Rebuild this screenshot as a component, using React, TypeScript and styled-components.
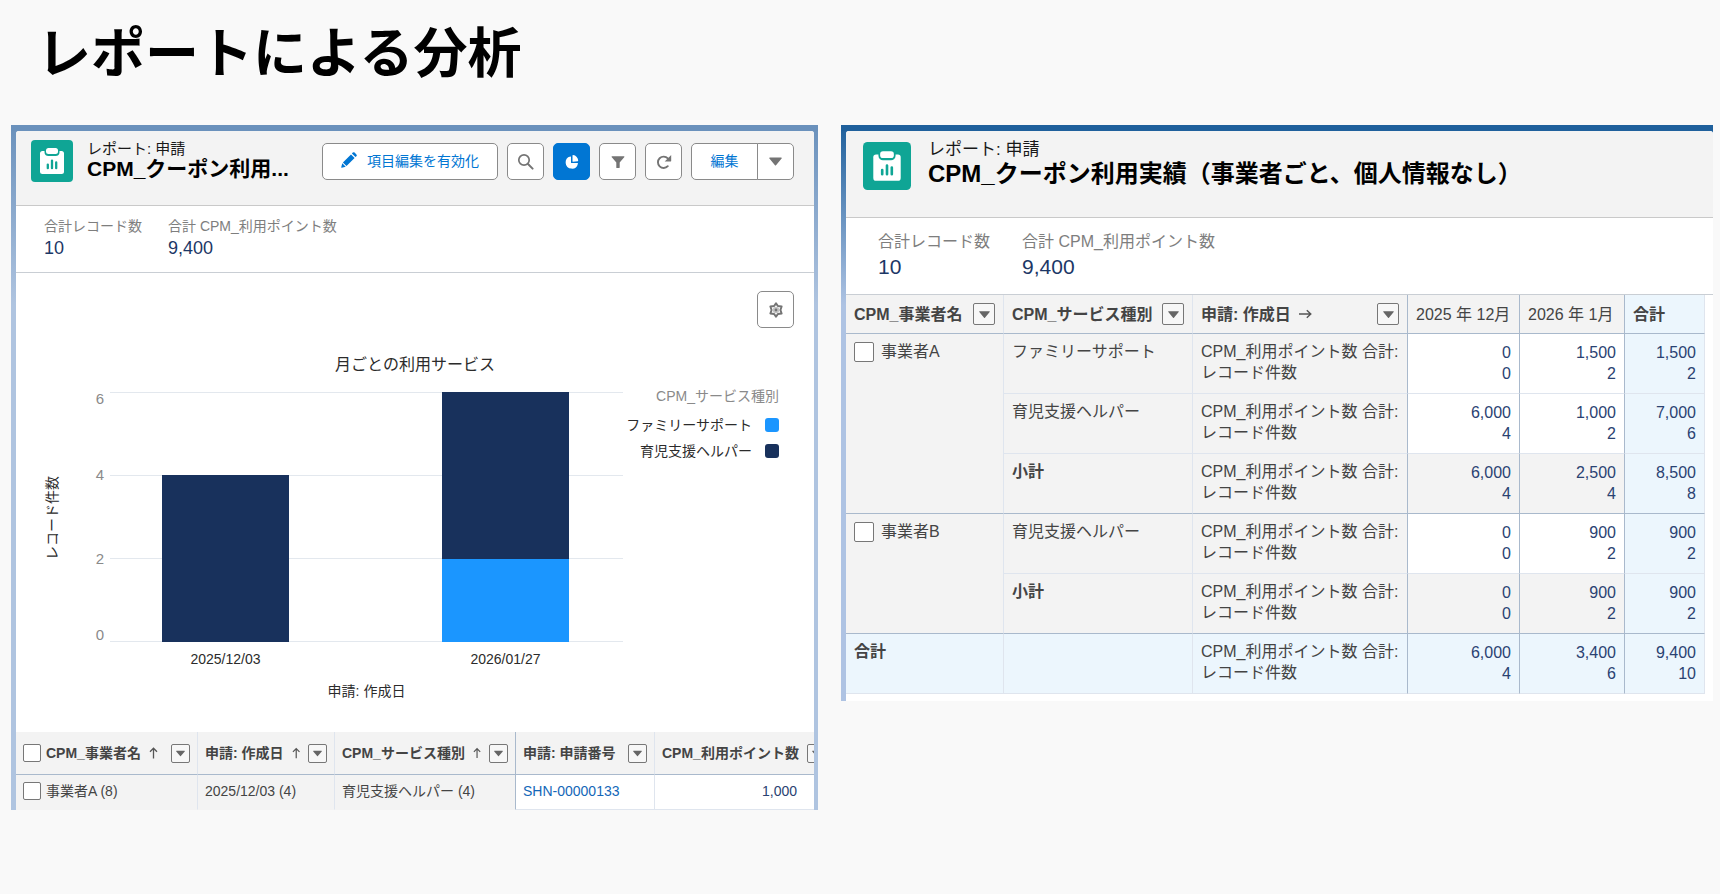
import React from "react";
import styled, { createGlobalStyle, css } from "styled-components";

const GlobalStyle = createGlobalStyle`
  *, *::before, *::after { box-sizing: border-box; }
  body {
    margin: 0;
    background: #f9f9f9;
    color: #444;
    font-family: "Liberation Sans", "Noto Sans CJK JP", sans-serif;
    font-size: 14px;
  }
  button { font: inherit; }
`;

const navy = "#18315c";
const sky = "#1b96ff";
const gray = "#f3f3f3";

const SlideTitle = styled.h1`
  margin: 0;
  padding: 10px 37px 35px;
  color: #000;
  font-family: "Noto Sans CJK JP", sans-serif;
  font-size: 54px;
  line-height: 80px;
  font-weight: 700;
`;

const Reports = styled.main`
  display: grid;
  grid-template-columns: minmax(0, 807fr) minmax(0, 872fr);
  gap: 23px;
  align-items: start;
  padding: 0 7px 40px 11px;
`;

const Frame = styled.section<{ $top: string; $side: string; $right?: boolean }>`
  padding: 6px ${(p) => (p.$right ? 4 : 0)}px 0 5px;
  background: linear-gradient(${(p) => p.$top}, ${(p) => p.$top}) top / 100% 6px no-repeat,
    linear-gradient(${(p) => p.$top}, ${(p) => p.$side} 180px);
`;

const FrameBody = styled.div`
  overflow: hidden;
  background: #fff;
  border-radius: 3px 3px 0 0;
`;

const Header = styled.header<{ $large?: boolean }>`
  display: flex;
  align-items: flex-start;
  gap: ${(p) => (p.$large ? 17 : 14)}px;
  min-height: ${(p) => (p.$large ? 87 : 75)}px;
  padding: 9px 20px 0 ${(p) => (p.$large ? 17 : 15)}px;
  background: ${gray};
  border-bottom: 1px solid #c9c9c9;
`;

const HeaderIcon = styled.svg<{ $large?: boolean }>`
  flex: none;
  width: ${(p) => (p.$large ? 48 : 42)}px;
  height: ${(p) => (p.$large ? 48 : 42)}px;
  margin-top: ${(p) => (p.$large ? 2 : 0)}px;
`;

const Heading = styled.div`
  flex: 1;
  min-width: 0;
  color: #000;
  white-space: nowrap;
`;

const Kind = styled.p<{ $large?: boolean }>`
  margin: 0;
  color: #181818;
  font-size: ${(p) => (p.$large ? 17 : 15)}px;
  line-height: ${(p) => (p.$large ? 20 : 17)}px;
`;

const ReportName = styled.h2<{ $large?: boolean }>`
  margin: 0;
  font-size: ${(p) => (p.$large ? 24 : 21)}px;
  line-height: ${(p) => (p.$large ? 28 : 24)}px;
  font-weight: 700;
`;

const Toolbar = styled.div`
  display: flex;
  gap: 9px;
  padding-top: 3px;
`;

const Button = styled.button<{ $brand?: boolean }>`
  display: flex;
  align-items: center;
  justify-content: center;
  gap: 10px;
  height: 37px;
  min-width: 37px;
  padding: 0;
  border: 1px solid ${(p) => (p.$brand ? "#0176d3" : "#8a8a8a")};
  border-radius: 5px;
  background: ${(p) => (p.$brand ? "#0176d3" : "#fff")};
  color: ${(p) => (p.$brand ? "#fff" : "#747474")};
`;

const TextButton = styled(Button)`
  padding: 0 18px 3px;
  color: #0176d3;
`;

const ButtonGroup = styled.div`
  display: flex;
  & > button:first-child { width: 67px; border-radius: 5px 0 0 5px; }
  & > button:last-child { margin-left: -1px; border-radius: 0 5px 5px 0; }
`;

const Metrics = styled.dl<{ $large?: boolean }>`
  display: flex;
  gap: ${(p) => (p.$large ? 32 : 26)}px;
  margin: 0;
  height: ${(p) => (p.$large ? 77 : 67)}px;
  padding: ${(p) => (p.$large ? "12px 32px 0" : "10px 28px 0")};
  border-bottom: 1px solid #c9ced4;
  font-size: ${(p) => (p.$large ? 16 : 14)}px;

  dt { color: #7e7e7e; line-height: ${(p) => (p.$large ? 24 : 20)}px; }
  dd {
    margin: 0;
    color: #1c3766;
    font-size: ${(p) => (p.$large ? 21 : 18)}px;
    line-height: 25px;
  }
`;

const ChartArea = styled.figure`
  margin: 0;
  padding: 18px 20px 32px;
  color: #2b2b2b;
`;

const ChartTools = styled.div`
  display: flex;
  justify-content: flex-end;
`;

const ChartTitle = styled.figcaption`
  margin: 25px 0 10px;
  text-align: center;
  font-size: 16px;
  line-height: 24px;
`;

const Chart = styled.div`
  display: grid;
  grid-template-columns: 18px 43px minmax(0, 1fr) 156px;
  padding: 0 15px 0 7px;
`;

const YTitle = styled.div`
  align-self: center;
  height: 84px;
  margin-top: 7px;
  writing-mode: vertical-rl;
  text-orientation: sideways;
  transform: rotate(180deg);
  line-height: 18px;
`;

const YTicks = styled.div`
  display: grid;
  grid-template-rows: 1fr 2fr 2fr 1fr;
  align-items: center;
  height: 250px;
  margin-top: 5px;
  color: #8a8a8a;
  font-size: 15px;
  line-height: 14px;
  text-align: right;
  & > :first-child { align-self: start; }
  & > :last-child { align-self: end; }
`;

const Plot = styled.div`
  display: grid;
  height: 250px;
  margin: 5px 0 0 6px;
  & > * { grid-area: 1 / 1; }
`;

const GridLines = styled.div`
  display: flex;
  flex-direction: column;
  justify-content: space-between;
  & > i { height: 1px; background: #e3e8ee; }
`;

const columns = css`
  display: grid;
  grid-template-columns: 1fr 1fr;
  column-gap: 153px;
  padding: 0 54px 0 52px;
`;

const Bars = styled.div`
  ${columns}
  align-items: end;
  z-index: 1;
`;

const Bar = styled.div`
  display: flex;
  flex-direction: column;
  justify-content: flex-end;
  height: 100%;
`;

const Segment = styled.div<{ $color: string; $count: number }>`
  height: ${(p) => (p.$count / 6) * 100}%;
  background: ${(p) => p.$color};
`;

const XTicks = styled.div`
  ${columns}
  grid-column: 3;
  margin: 8px 0 0 6px;
  line-height: 18px;
  text-align: center;
  white-space: nowrap;
`;

const XTitle = styled.div`
  grid-column: 3;
  margin: 14px 0 0 6px;
  line-height: 18px;
  text-align: center;
`;

const Legend = styled.div`
  text-align: right;
  white-space: nowrap;
  p { margin: 0; color: #8a8a8a; line-height: 18px; }
  ul { margin: 7px 0 0; padding: 0; list-style: none; }
  li { display: flex; justify-content: flex-end; align-items: center; gap: 13px; line-height: 26px; }
`;

const Swatch = styled.span<{ $color: string }>`
  width: 14px;
  height: 14px;
  border-radius: 3px;
  background: ${(p) => p.$color};
`;

const Table = styled.table<{ $large?: boolean }>`
  width: 100%;
  min-width: ${(p) => (p.$large ? 0 : 817)}px;
  table-layout: fixed;
  border-collapse: separate;
  border-spacing: 0;
  font-size: ${(p) => (p.$large ? 16 : 14)}px;
  line-height: ${(p) => (p.$large ? 21 : 18)}px;
  white-space: nowrap;
`;

type Edge = "light" | "strong";
const edgeColor = { light: "#dfe5ee", strong: "#a9b9cc" };

const HeadCell = styled.th<{ $edge?: Edge; $large?: boolean; $total?: boolean; $plain?: boolean }>`
  height: ${(p) => (p.$large ? 39 : 43)}px;
  padding: 0 ${(p) => (p.$large ? 8 : 7)}px;
  background: ${(p) => (p.$total ? "#ecf6fd" : gray)};
  border-right: 1px solid ${(p) => edgeColor[p.$edge ?? "light"]};
  border-bottom: 1px solid #a9b9cc;
  font-weight: ${(p) => (p.$plain ? 400 : 700)};
  text-align: left;
`;

const HeadContent = styled.div`
  display: flex;
  align-items: center;
  gap: 8px;
  & > button { margin-left: auto; }
`;

const MenuButton = styled.button<{ $large?: boolean }>`
  display: flex;
  flex: none;
  align-items: center;
  justify-content: center;
  width: ${(p) => (p.$large ? 22 : 19)}px;
  height: ${(p) => (p.$large ? 22 : 19)}px;
  padding: 0;
  border: 1px solid #777;
  border-radius: 2px;
  background: #f7f7f7;
  color: #666;
`;

const CheckLabel = styled.label<{ $large?: boolean }>`
  display: flex;
  align-items: center;
  gap: ${(p) => (p.$large ? 7 : 5)}px;
`;

const Checkbox = styled.input.attrs({ type: "checkbox" })<{ $large?: boolean }>`
  appearance: none;
  flex: none;
  width: ${(p) => (p.$large ? 20 : 18)}px;
  height: ${(p) => (p.$large ? 20 : 18)}px;
  margin: 0;
  border: 1px solid #777;
  border-radius: 2px;
  background: #fff;
  &:checked { background: #0176d3; }
`;

const DetailCell = styled.td<{ $edge?: Edge; $grouped?: boolean }>`
  height: 35px;
  padding: 0 7px 3px;
  background: ${(p) => (p.$grouped ? gray : "#fff")};
  border-right: 1px solid ${(p) => edgeColor[p.$edge ?? "light"]};
  border-bottom: 1px solid ${(p) => (p.$grouped ? gray : "#dfe5ee")};
  a { color: #1467b8; text-decoration: none; }
`;

const AmountCell = styled(DetailCell)`
  padding-right: 35px;
  color: #2a4272;
  text-align: right;
`;

const MatrixCell = styled.td<{ $edge?: Edge; $last?: boolean; $tone: "gray" | "white" | "blue"; $strong?: boolean; $num?: boolean }>`
  height: 60px;
  padding: ${(p) => (p.$num ? "8px 8px 0" : "7px 8px 0")};
  vertical-align: top;
  background: ${(p) => ({ gray, white: "#fff", blue: "#ecf6fd" })[p.$tone]};
  border-right: 1px solid ${(p) => edgeColor[p.$edge ?? "light"]};
  border-bottom: 1px solid ${(p) => edgeColor[p.$last ? "strong" : "light"]};
  color: ${(p) => (p.$num ? "#2a4272" : "#444")};
  font-weight: ${(p) => (p.$strong ? 700 : 400)};
  text-align: ${(p) => (p.$num ? "right" : "left")};
`;

const TableWrap = styled.div`
  padding: 0 8px 7px 0;
`;

function ReportIcon({ large }: { large?: boolean }) {
  return (
    <HeaderIcon $large={large} viewBox="0 0 42 42" aria-hidden="true">
      <rect width="42" height="42" rx="4" fill="#0fa595" />
      <rect x="9" y="11" width="24" height="23" rx="2.5" fill="#fff" />
      <rect x="13.5" y="6.5" width="15" height="9.5" rx="4" fill="#0fa595" />
      <rect x="15" y="8" width="12" height="6" rx="2.5" fill="#fff" />
      <path d="M16.8 24.6v3.6M21 20.6v7.6M25.2 22.4v5.8" stroke="#0fa595" strokeWidth="2.3" strokeLinecap="round" />
    </HeaderIcon>
  );
}

const Triangle = ({ size = 9 }: { size?: number }) => (
  <svg width={size} height={size} viewBox="0 0 10 10" aria-hidden="true">
    <path d="M.6 2h8.8a.4.4 0 0 1 .3.7L5.4 7.9a.5.5 0 0 1-.8 0L.3 2.7A.4.4 0 0 1 .6 2z" fill="currentColor" />
  </svg>
);

const SortArrow = ({ right }: { right?: boolean }) =>
  right ? (
    <svg width="13" height="12" viewBox="0 0 13 12" fill="none" stroke="#555" strokeWidth="1.4" aria-hidden="true">
      <path d="M0 6h11.5M7.8 2.2 11.8 6l-4 3.8" />
    </svg>
  ) : (
    <svg width="9" height="12" viewBox="0 0 9 12" fill="none" stroke="#555" strokeWidth="1.3" aria-hidden="true">
      <path d="M4.5 11.5V1.5M1 4.8l3.5-3.6L8 4.8" />
    </svg>
  );

const PencilIcon = () => (
  <svg width="16" height="16" viewBox="0 0 16 16" fill="currentColor" aria-hidden="true">
    <path d="M1.9 10.5 10 2.4l3.6 3.6-8.1 8.1zM10.9 1.5l.9-.9a1.3 1.3 0 0 1 1.8 0l1.8 1.8a1.3 1.3 0 0 1 0 1.8l-.9.9zM1.3 11.3l3.4 3.4-3.9 1.1c-.4.1-.7-.2-.6-.6z" />
  </svg>
);

const SearchIcon = () => (
  <svg width="17" height="17" viewBox="0 0 17 17" fill="none" stroke="currentColor" aria-hidden="true">
    <circle cx="7" cy="7" r="5.2" strokeWidth="1.7" />
    <path d="m11 11 4.6 4.6" strokeWidth="2" strokeLinecap="round" />
  </svg>
);

const PieIcon = () => (
  <svg width="14" height="14" viewBox="0 0 14 14" fill="currentColor" aria-hidden="true">
    <path d="M6 1.9a.5.5 0 0 0-.6-.5A6.2 6.2 0 1 0 12.9 8.7a.5.5 0 0 0-.5-.7H6.5a.5.5 0 0 1-.5-.5z" />
    <path d="M7.5.6c0-.3.2-.5.5-.5a5.6 5.6 0 0 1 5.200 5.6c0 .3-.2.5-.5.5L8 6.7a.5.5 0 0 1-.5-.5z" />
  </svg>
);

const FunnelIcon = () => (
  <svg width="14" height="14" viewBox="0 0 14 14" fill="currentColor" aria-hidden="true">
    <path d="M1.2 1.2h11.6c.5 0 .8.6.4 1L8.700 7.5v5c0 .3-.2.5-.5.5H5.8a.5.5 0 0 1-.5-.5v-5L.8 2.2c-.4-.4-.1-1 .4-1z" />
  </svg>
);

const RefreshIcon = () => (
  <svg width="16" height="16" viewBox="0 0 16 16" aria-hidden="true">
    <path d="M11.8 12.2A5.7 5.7 0 1 1 11.800 4.400" fill="none" stroke="currentColor" strokeWidth="1.9" strokeLinecap="round" />
    <path d="M15.200.9v6c0 .3-.2.5-.5.5H8.700z" fill="currentColor" />
  </svg>
);

const GearIcon = () => (
  <svg width="16" height="16" viewBox="0 0 16 16" fill="none" stroke="currentColor" aria-hidden="true">
    <path d="M8 1.4 9.900 4 13.600 4.500 12.400 8 13.600 11.500 9.900 12 8 14.600 6.100 12 2.400 11.500 3.600 8 2.400 4.500 6.100 4z" strokeWidth="2" strokeLinejoin="round" />
    <circle cx="8" cy="8" r="3.200" fill="#c4c4c4" stroke="none" />
    <circle cx="8" cy="8" r="1.400" fill="currentColor" stroke="none" />
  </svg>
);

function ColumnHead({ text, arrow, large }: { text: React.ReactNode; arrow?: "up" | "right"; large?: boolean }) {
  return (
    <HeadContent>
      {text}
      {arrow && <SortArrow right={arrow === "right"} />}
      <MenuButton $large={large} type="button" aria-label="列のアクション">
        <Triangle size={large ? 11 : 9} />
      </MenuButton>
    </HeadContent>
  );
}

type Pair = [string, string];
interface MatrixRow {
  group?: string;
  span?: number;
  service: string;
  subtotal?: boolean;
  last?: boolean;
  values: [Pair, Pair, Pair];
}

const matrix: MatrixRow[] = [
  { group: "事業者A", span: 3, service: "ファミリーサポート", values: [["0", "0"], ["1,500", "2"], ["1,500", "2"]] },
  { service: "育児支援ヘルパー", values: [["6,000", "4"], ["1,000", "2"], ["7,000", "6"]] },
  { service: "小計", subtotal: true, last: true, values: [["6,000", "4"], ["2,500", "4"], ["8,500", "8"]] },
  { group: "事業者B", span: 2, service: "育児支援ヘルパー", values: [["0", "0"], ["900", "2"], ["900", "2"]] },
  { service: "小計", subtotal: true, last: true, values: [["0", "0"], ["900", "2"], ["900", "2"]] },
];

const totals: Pair[] = [["6,000", "4"], ["3,400", "6"], ["9,400", "10"]];

const Measures = () => (
  <>
    CPM_利用ポイント数 合計:
    <br />
    レコード件数
  </>
);

function Summary({ large }: { large?: boolean }) {
  return (
    <Metrics $large={large}>
      <div>
        <dt>合計レコード数</dt>
        <dd>10</dd>
      </div>
      <div>
        <dt>合計 CPM_利用ポイント数</dt>
        <dd>9,400</dd>
      </div>
    </Metrics>
  );
}

function UsageReport() {
  return (
    <Frame $top="#6a91bc" $side="#afc4e0" $right>
      <FrameBody>
        <Header>
          <ReportIcon />
          <Heading>
            <Kind>レポート: 申請</Kind>
            <ReportName>CPM_クーポン利用...</ReportName>
          </Heading>
          <Toolbar>
            <TextButton type="button">
              <PencilIcon />
              項目編集を有効化
            </TextButton>
            <Button type="button" aria-label="検索"><SearchIcon /></Button>
            <Button type="button" $brand aria-label="グラフ"><PieIcon /></Button>
            <Button type="button" aria-label="検索条件"><FunnelIcon /></Button>
            <Button type="button" aria-label="更新"><RefreshIcon /></Button>
            <ButtonGroup>
              <TextButton type="button">編集</TextButton>
              <Button type="button" aria-label="その他のアクション"><Triangle size={13} /></Button>
            </ButtonGroup>
          </Toolbar>
        </Header>
        <Summary />
        <ChartArea>
          <ChartTools>
            <Button type="button" aria-label="グラフのプロパティ"><GearIcon /></Button>
          </ChartTools>
          <ChartTitle>月ごとの利用サービス</ChartTitle>
          <Chart>
            <YTitle>レコード件数</YTitle>
            <YTicks>
              <span>6</span>
              <span>4</span>
              <span>2</span>
              <span>0</span>
            </YTicks>
            <Plot>
              <GridLines><i /><i /><i /><i /></GridLines>
              <Bars>
                <Bar><Segment $color={navy} $count={4} /></Bar>
                <Bar>
                  <Segment $color={navy} $count={4} />
                  <Segment $color={sky} $count={2} />
                </Bar>
              </Bars>
            </Plot>
            <Legend>
              <p>CPM_サービス種別</p>
              <ul>
                <li>ファミリーサポート<Swatch $color={sky} /></li>
                <li>育児支援ヘルパー<Swatch $color={navy} /></li>
              </ul>
            </Legend>
            <XTicks>
              <span>2025/12/03</span>
              <span>2026/01/27</span>
            </XTicks>
            <XTitle>申請: 作成日</XTitle>
          </Chart>
        </ChartArea>
        <Table>
          <colgroup>
            <col width="182" />
            <col width="137" />
            <col width="181" />
            <col width="139" />
            <col width="178" />
          </colgroup>
          <thead>
            <tr>
              <HeadCell><ColumnHead arrow="up" text={<CheckLabel><Checkbox />CPM_事業者名</CheckLabel>} /></HeadCell>
              <HeadCell><ColumnHead arrow="up" text="申請: 作成日" /></HeadCell>
              <HeadCell $edge="strong"><ColumnHead arrow="up" text="CPM_サービス種別" /></HeadCell>
              <HeadCell><ColumnHead text="申請: 申請番号" /></HeadCell>
              <HeadCell><ColumnHead text="CPM_利用ポイント数" /></HeadCell>
            </tr>
          </thead>
          <tbody>
            <tr>
              <DetailCell $grouped><CheckLabel><Checkbox />事業者A (8)</CheckLabel></DetailCell>
              <DetailCell $grouped>2025/12/03 (4)</DetailCell>
              <DetailCell $grouped $edge="strong">育児支援ヘルパー (4)</DetailCell>
              <DetailCell><a href="#SHN-00000133">SHN-00000133</a></DetailCell>
              <AmountCell>1,000</AmountCell>
            </tr>
          </tbody>
        </Table>
      </FrameBody>
    </Frame>
  );
}

function ProviderReport() {
  return (
    <Frame $top="#1f609c" $side="#aec3e3">
      <FrameBody>
        <Header $large>
          <ReportIcon large />
          <Heading>
            <Kind $large>レポート: 申請</Kind>
            <ReportName $large>CPM_クーポン利用実績（事業者ごと、個人情報なし）</ReportName>
          </Heading>
        </Header>
        <Summary large />
        <TableWrap>
          <Table $large>
            <colgroup>
              <col width="158" />
              <col width="189" />
              <col width="215" />
              <col width="112" />
              <col width="105" />
              <col width="80" />
            </colgroup>
            <thead>
              <tr>
                <HeadCell $large><ColumnHead large text="CPM_事業者名" /></HeadCell>
                <HeadCell $large><ColumnHead large text="CPM_サービス種別" /></HeadCell>
                <HeadCell $large $edge="strong"><ColumnHead large arrow="right" text="申請: 作成日" /></HeadCell>
                <HeadCell $large $plain $edge="strong">2025 年 12月</HeadCell>
                <HeadCell $large $plain $edge="strong">2026 年 1月</HeadCell>
                <HeadCell $large $total>合計</HeadCell>
              </tr>
            </thead>
            <tbody>
              {matrix.map((row, i) => (
                <tr key={i}>
                  {row.group && (
                    <MatrixCell $tone="gray" $last rowSpan={row.span}>
                      <CheckLabel $large><Checkbox $large />{row.group}</CheckLabel>
                    </MatrixCell>
                  )}
                  <MatrixCell $tone="gray" $last={row.last} $strong={row.subtotal}>{row.service}</MatrixCell>
                  <MatrixCell $tone="gray" $last={row.last} $edge="strong"><Measures /></MatrixCell>
                  {row.values.map(([points, count], j) => (
                    <MatrixCell
                      key={j}
                      $num
                      $last={row.last}
                      $edge={j < 2 ? "strong" : "light"}
                      $tone={j === 2 ? "blue" : row.subtotal ? "gray" : "white"}
                    >
                      {points}
                      <br />
                      {count}
                    </MatrixCell>
                  ))}
                </tr>
              ))}
              <tr>
                <MatrixCell $tone="blue" $strong>合計</MatrixCell>
                <MatrixCell $tone="blue" />
                <MatrixCell $tone="blue" $edge="strong"><Measures /></MatrixCell>
                {totals.map(([points, count], j) => (
                  <MatrixCell key={j} $num $tone="blue" $edge={j < 2 ? "strong" : "light"}>
                    {points}
                    <br />
                    {count}
                  </MatrixCell>
                ))}
              </tr>
            </tbody>
          </Table>
        </TableWrap>
      </FrameBody>
    </Frame>
  );
}

export default function App() {
  return (
    <>
      <GlobalStyle />
      <SlideTitle>レポートによる分析</SlideTitle>
      <Reports>
        <UsageReport />
        <ProviderReport />
      </Reports>
    </>
  );
}
